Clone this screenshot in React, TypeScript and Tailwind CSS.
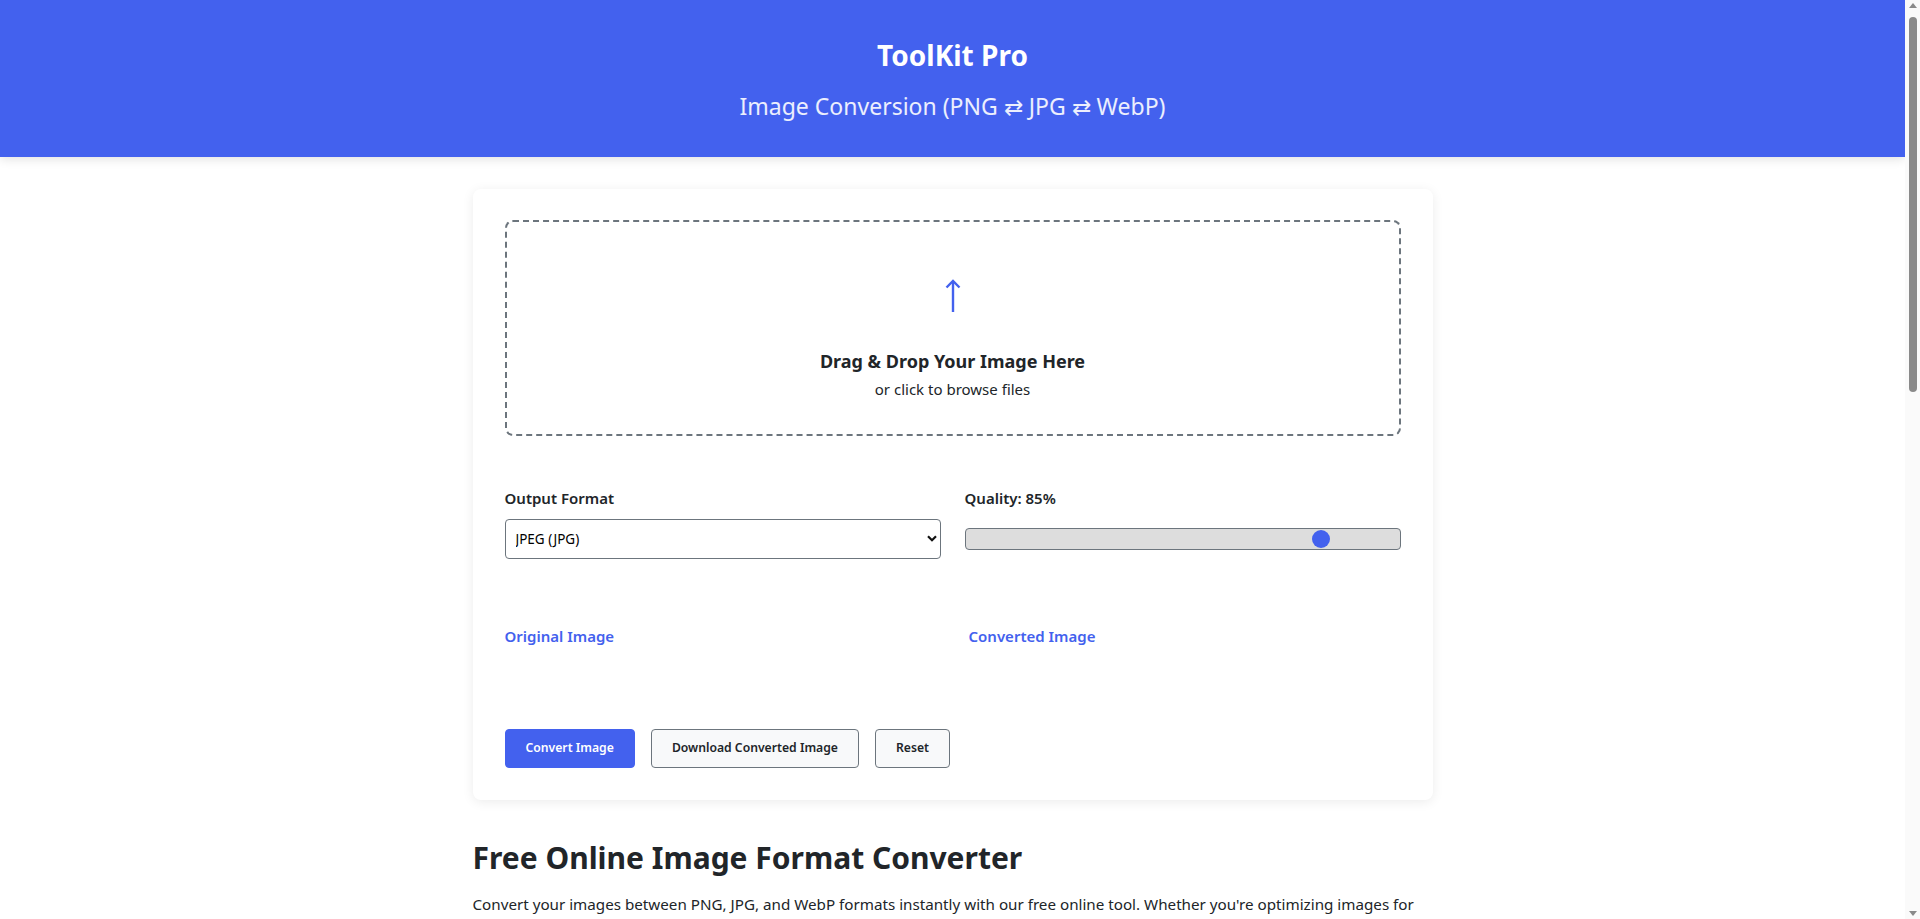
import React, { useState } from 'react'

const font = { fontFamily: '"Noto Sans", "Open Sans", sans-serif' }

function UploadArrow() {
  return (
    <svg width="16" height="34" viewBox="0 0 16 34" fill="none" stroke="#4361ee" strokeWidth="2.4" strokeLinecap="butt">
      <path d="M8 33V2" />
      <path d="M1.5 8.5L8 2l6.5 6.5" />
    </svg>
  )
}

function Chevron() {
  return (
    <svg width="10" height="7" viewBox="0 0 10 7" fill="none" stroke="#111" strokeWidth="2.2">
      <path d="M1 1.2l4 4 4-4" />
    </svg>
  )
}

// Windows-style page scrollbar, as in the screenshot
function ScrollBar() {
  return (
    <div className="sticky top-0 h-screen w-[15px] shrink-0 bg-[#fafafa] flex flex-col items-center">
      <div className="mt-[3px] w-0 h-0 border-l-[4px] border-r-[4px] border-b-[5px] border-l-transparent border-r-transparent border-b-[#8a8a8a]" />
      <div className="mt-[9px] w-[8px] h-[375px] rounded-full bg-[#8a8a8a]" />
      <div className="mt-auto mb-[3px] w-0 h-0 border-l-[4px] border-r-[4px] border-t-[5px] border-l-transparent border-r-transparent border-t-[#8a8a8a]" />
    </div>
  )
}

export default function App() {
  const [format, setFormat] = useState('jpeg')
  const [quality, setQuality] = useState(85)

  return (
    <div className="flex items-start bg-white text-[#212529]" style={font}>
      <div className="flex-1 min-w-0">
        {/* Header */}
        <header className="bg-[#4361ee] text-white text-center pt-[39px] pb-[34px] shadow-[0_2px_10px_rgba(0,0,0,0.12)]">
          <h1 className="text-[28px] leading-[1.2] font-bold">ToolKit Pro</h1>
          <p className="mt-[16px] text-[23px] leading-[1.5] text-white/90">Image Conversion (PNG ⇄ JPG ⇄ WebP)</p>
        </header>

        <main className="max-w-[960px] mx-auto pt-[32px] pb-16">
          {/* Tool card */}
          <section className="bg-white rounded-lg shadow-[0_2px_12px_rgba(0,0,0,0.08)] px-8 pt-[31px] pb-[32px]">
            <div className="h-[216px] border-2 border-dashed border-[#6c757d] rounded-lg flex flex-col items-center cursor-pointer pt-[57px]">
              <UploadArrow />
              <h3 className="mt-[35px] text-[18px] leading-[27px] font-bold">Drag &amp; Drop Your Image Here</h3>
              <p className="mt-[3px] text-[15px] leading-[22px]">or click to browse files</p>
            </div>

            <div className="grid grid-cols-2 gap-6 mt-[50px]">
              <div>
                <label className="block text-[15px] leading-[24px] font-semibold mb-[9px]">Output Format</label>
                <div className="relative">
                  <select
                    value={format}
                    onChange={e => setFormat(e.target.value)}
                    className="w-full h-[40px] appearance-none bg-white border border-[#6c757d] rounded-[4px] pl-[10px] pr-8 text-[13.5px] text-black"
                    style={font}
                  >
                    <option value="jpeg">JPEG (JPG)</option>
                    <option value="png">PNG</option>
                    <option value="webp">WebP</option>
                  </select>
                  <span className="absolute right-[4px] top-[16px] pointer-events-none">
                    <Chevron />
                  </span>
                </div>
              </div>
              <div>
                <label className="block text-[15px] leading-[24px] font-semibold mb-[9px]">Quality: {quality}%</label>
                <div className="h-[40px] flex items-center">
                  <input
                    type="range"
                    min={10}
                    max={100}
                    value={quality}
                    onChange={e => setQuality(Number(e.target.value))}
                    className="w-full h-[22px] appearance-none bg-[#dddddd] border border-[#6c757d] rounded-[4px] cursor-pointer [&::-webkit-slider-thumb]:appearance-none [&::-webkit-slider-thumb]:w-[18px] [&::-webkit-slider-thumb]:h-[18px] [&::-webkit-slider-thumb]:rounded-full [&::-webkit-slider-thumb]:bg-[#4361ee] [&::-webkit-slider-thumb]:border-0"
                  />
                </div>
              </div>
            </div>

            <div className="grid grid-cols-2 gap-8 mt-[65px]">
              <div className="h-[93px]">
                <h4 className="text-[15px] leading-[24px] font-semibold text-[#4361ee]">Original Image</h4>
              </div>
              <div className="h-[93px]">
                <h4 className="text-[15px] leading-[24px] font-semibold text-[#4361ee]">Converted Image</h4>
              </div>
            </div>

            <div className="flex gap-4 mt-[12px]">
              <button className="h-[39px] px-5 rounded-[4px] bg-[#4361ee] border border-[#4361ee] text-white text-[12.2px] font-semibold">Convert Image</button>
              <button className="h-[39px] px-5 rounded-[4px] bg-[#f8f9fa] border border-[#6c757d] text-[#212529] text-[12.2px] font-semibold">Download Converted Image</button>
              <button className="h-[39px] px-5 rounded-[4px] bg-[#f8f9fa] border border-[#6c757d] text-[#212529] text-[12.2px] font-semibold">Reset</button>
            </div>
          </section>

          {/* SEO content */}
          <article className="mt-[40px]">
            <h2 className="text-[30px] leading-[1.2] font-bold">Free Online Image Format Converter</h2>
            <p className="mt-[16px] text-[15.2px] leading-[1.6]">
              Convert your images between PNG, JPG, and WebP formats instantly with our free online tool. Whether you're optimizing images for
              the web, reducing file sizes, or need a specific format for compatibility, our converter handles it all right in your browser.
            </p>

            <h3 className="mt-8 text-[23px] leading-[1.3] font-bold">Why Convert Image Formats?</h3>
            <p className="mt-3 text-[15.2px] leading-[1.6]">
              Different image formats serve different purposes. JPG is ideal for photographs with many colors, PNG supports transparency and
              lossless compression, and WebP offers superior compression for faster websites.
            </p>
            <ul className="mt-3 pl-6 list-disc text-[15.2px] leading-[1.8]">
              <li>PNG to JPG: Reduce file size for photos and complex images</li>
              <li>JPG to PNG: Preserve quality for further editing</li>
              <li>PNG/JPG to WebP: Optimize images for modern websites</li>
              <li>WebP to JPG/PNG: Improve compatibility with older software</li>
            </ul>

            <h3 className="mt-8 text-[23px] leading-[1.3] font-bold">How to Use the Image Converter</h3>
            <ol className="mt-3 pl-6 list-decimal text-[15.2px] leading-[1.8]">
              <li>Drag and drop your image into the upload area, or click to browse files.</li>
              <li>Select the output format you need: JPG, PNG, or WebP.</li>
              <li>Adjust the quality slider for JPG and WebP output.</li>
              <li>Click "Convert Image" and preview the result.</li>
              <li>Download your converted image with one click.</li>
            </ol>

            <h3 className="mt-8 text-[23px] leading-[1.3] font-bold">Private and Secure</h3>
            <p className="mt-3 text-[15.2px] leading-[1.6]">
              All conversions happen locally in your browser. Your images are never uploaded to a server, so your files stay private and the
              conversion is fast regardless of your connection speed.
            </p>

            <h3 className="mt-8 text-[23px] leading-[1.3] font-bold">Frequently Asked Questions</h3>
            <h4 className="mt-4 text-[17px] font-semibold">Is this image converter free?</h4>
            <p className="mt-2 text-[15.2px] leading-[1.6]">Yes, ToolKit Pro's image converter is completely free with no sign-up required.</p>
            <h4 className="mt-4 text-[17px] font-semibold">Does converting reduce image quality?</h4>
            <p className="mt-2 text-[15.2px] leading-[1.6]">
              Converting to PNG is lossless. For JPG and WebP you can choose the quality level to balance file size and visual fidelity.
            </p>
            <h4 className="mt-4 text-[17px] font-semibold">Which format should I choose?</h4>
            <p className="mt-2 text-[15.2px] leading-[1.6]">
              Use WebP for websites, JPG for photos you want to share, and PNG for graphics, screenshots and images that need transparency.
            </p>
          </article>
        </main>

        <footer className="bg-[#212529] text-white/80 text-center py-8 text-[14px]">
          © ToolKit Pro. All rights reserved.
        </footer>
      </div>
      <ScrollBar />
    </div>
  )
}
